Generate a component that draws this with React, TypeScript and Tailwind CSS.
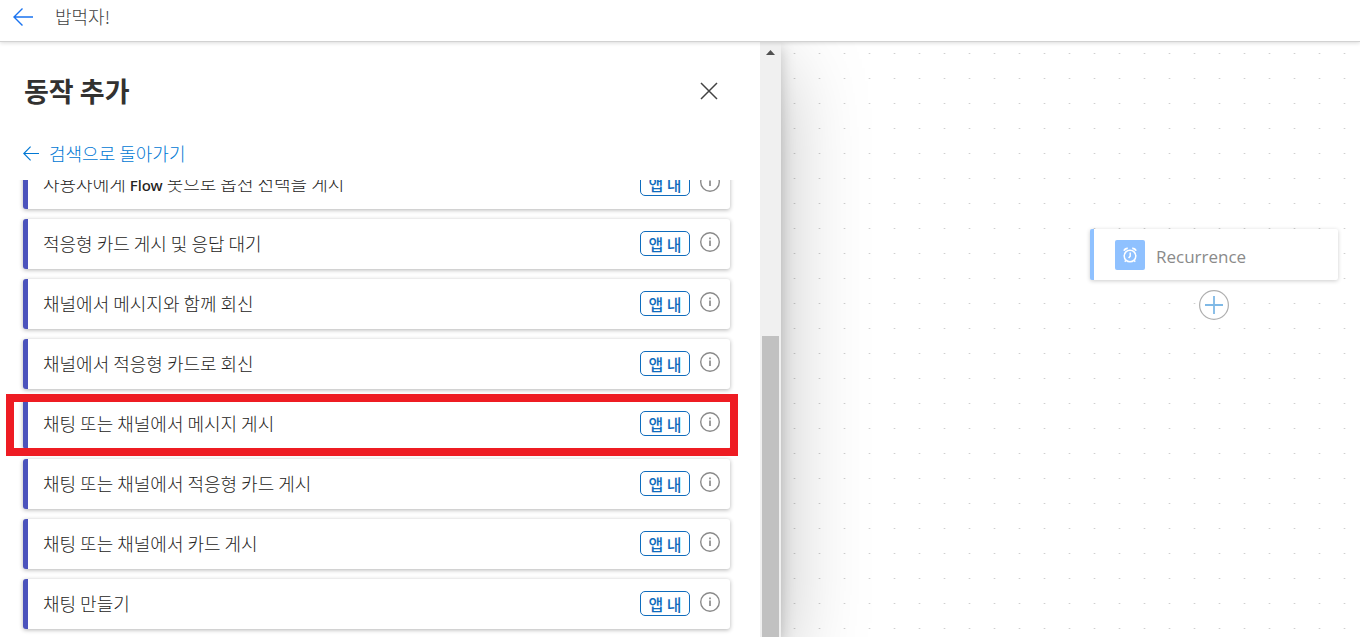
import type { ReactNode } from 'react';

const actions: ReactNode[] = [
  <>
    사용자에게 <span className="font-['Noto_Sans',sans-serif] text-[15px] font-medium">Flow</span> 봇으로 옵션 선택을 게시
  </>,
  '적응형 카드 게시 및 응답 대기',
  '채널에서 메시지와 함께 회신',
  '채널에서 적응형 카드로 회신',
  '채팅 또는 채널에서 메시지 게시',
  '채팅 또는 채널에서 적응형 카드 게시',
  '채팅 또는 채널에서 카드 게시',
  '채팅 만들기',
];

const highlighted = 4;

function ArrowLeft({ className }: { className: string }) {
  return (
    <svg viewBox="0 0 20 18" fill="none" stroke="currentColor" strokeWidth="1.4" className={className} aria-hidden="true">
      <path d="M20 9H1M9.5 0.5L1 9l8.5 8.5" />
    </svg>
  );
}

function InfoIcon() {
  return (
    <svg viewBox="0 0 20 20" fill="none" className="h-5 w-5" aria-hidden="true">
      <circle cx="10" cy="10" r="9.3" stroke="#8a8a8a" strokeWidth="1.4" />
      <path d="M10 8.5v5.5M10 5.6v1.6" stroke="#8a8a8a" strokeWidth="1.7" />
    </svg>
  );
}

function AlarmIcon() {
  return (
    <svg viewBox="0 0 16 16" fill="none" stroke="white" strokeWidth="1.5" className="h-4 w-4" aria-hidden="true">
      <circle cx="8" cy="9" r="5.8" />
      <path d="M8.2 5.5v3.8L6.6 11" />
      <path d="M2 3.8C2.6 2.2 4 1.2 5.8 1.3M14 3.8C13.4 2.2 12 1.2 10.2 1.3" strokeWidth="1.8" />
      <path d="M3.8 13.4L2.8 14.8M12.2 13.4l1 1.4" />
    </svg>
  );
}

function ActionRow({ name, marked }: { name: ReactNode; marked: boolean }) {
  return (
    <li className="relative flex h-[50px] items-center rounded-[3px] border-l-[5px] border-[#4b53bc] bg-white pr-[10px] shadow-[0_1px_4px_rgba(0,0,0,0.3)]">
      <button type="button" className="h-full min-w-0 flex-1 truncate pb-0.5 pl-[15px] text-left text-[18px] font-light text-[#242322]">
        {name}
      </button>
      <span className="mb-px flex h-[25px] w-[50px] items-center justify-center rounded-[5px] border border-[#0f6cbd] text-[16px] font-medium text-[#0f6cbd]">
        앱 내
      </span>
      <button type="button" aria-label="정보" className="ml-[10px] pb-1">
        <InfoIcon />
      </button>
      {marked && (
        <span className="pointer-events-none absolute -top-[5px] -right-2 -bottom-[7px] -left-[22px] border-8 border-[#ee1c23]" />
      )}
    </li>
  );
}

function ActionPanel() {
  return (
    <aside className="relative z-10 flex min-w-0 flex-[781_1_0%] bg-white shadow-[0_26px_80px_rgba(0,0,0,0.25),0_5px_14px_rgba(0,0,0,0.2)]">
      <div className="min-w-0 flex-1">
        <div className="mt-[29px] flex h-10 items-center justify-between pr-[42px] pl-6">
          <h2 className="text-[27px] font-bold text-[#323130]">동작 추가</h2>
          <button type="button" aria-label="닫기">
            <svg viewBox="0 0 18 18" className="h-[18px] w-[18px]" stroke="#424242" strokeWidth="1.5" aria-hidden="true">
              <path d="M1 1l16 16M17 1L1 17" />
            </svg>
          </button>
        </div>
        <a href="#" className="mt-[30px] mb-[15px] ml-[23px] flex h-6 items-center gap-[10px] text-[18px] font-light text-[#0078d4]">
          <ArrowLeft className="h-[15px] w-4" />
          검색으로 돌아가기
        </a>
        <div className="overflow-hidden">
          <ul className="-mt-[21px] flex flex-col gap-[10px] pr-[30px] pb-2 pl-[23px]">
            {actions.map((name, i) => (
              <ActionRow key={i} name={name} marked={i === highlighted} />
            ))}
          </ul>
        </div>
      </div>
      <div className="flex w-[21px] flex-col items-center bg-[#f0f0f0] pt-2">
        <svg viewBox="0 0 9 5" className="h-[5px] w-[9px]" fill="#505050" aria-hidden="true">
          <path d="M0 5L4.5 0L9 5z" />
        </svg>
        <div className="mt-auto h-[301px] w-[17px] bg-[#c1c1c1]" />
      </div>
    </aside>
  );
}

function Canvas() {
  return (
    <section className="relative min-w-0 flex-[579_1_0%] bg-white">
      <svg className="absolute inset-0 h-full w-full" aria-hidden="true">
        <defs>
          <pattern id="dots" width="25" height="25" patternUnits="userSpaceOnUse">
            <path d="M12 11.5h3" stroke="#f0f0f0" />
            <path d="M13 11.5h1" stroke="#cfcfcf" />
          </pattern>
        </defs>
        <rect width="100%" height="100%" fill="url(#dots)" />
      </svg>
      <button
        type="button"
        className="absolute top-[187px] left-[309px] flex h-[51px] w-[248px] items-center rounded-xs border-l-4 border-[#8fc1ff] bg-white pl-[21px] shadow-[0_1px_4px_rgba(0,0,0,0.2)]"
      >
        <span className="flex h-[30px] w-[30px] items-center justify-center rounded-xs bg-[#8fc1ff]">
          <AlarmIcon />
        </span>
        <span className="ml-[11px] pt-1 font-['Open_Sans',sans-serif] text-[17px] text-[#8a8a8a]">Recurrence</span>
      </button>
      <button type="button" aria-label="추가" className="absolute top-[248px] left-[418px]">
        <svg viewBox="0 0 30 30" className="h-[30px] w-[30px]" fill="none" aria-hidden="true">
          <circle cx="15" cy="15" r="14.4" fill="white" stroke="#b0b0b0" strokeWidth="1.2" />
          <path d="M15 6v18M6 15h18" stroke="#7fb9e6" strokeWidth="1.8" />
        </svg>
      </button>
    </section>
  );
}

export default function App() {
  return (
    <div className="bg-white font-['Noto_Sans_CJK_KR',sans-serif]">
      <header className="relative z-20 flex h-[42px] items-center border-b border-[#d2d2d2] bg-white pb-2 pl-[13px] shadow-[0_1px_4px_rgba(0,0,0,0.15)]">
        <button type="button" aria-label="뒤로" className="text-[#1a73f0]">
          <ArrowLeft className="h-[18px] w-5" />
        </button>
        <h1 className="ml-[22px] text-[18px] font-light text-[#424242]">밥먹자!</h1>
      </header>
      <main className="flex overflow-hidden">
        <ActionPanel />
        <Canvas />
      </main>
    </div>
  );
}
